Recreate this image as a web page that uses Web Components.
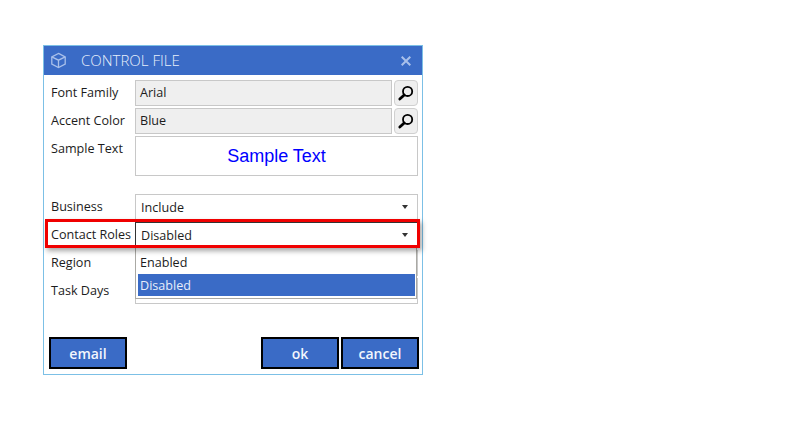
<!DOCTYPE html>
<html>
<head>
<meta charset="utf-8">
<title>Control File</title>
<style>
    html, body {
        margin: 0;
        background: #fff;
    }

    body {
        padding: 45px 0 0 43px;
        font-family: "Open Sans", "Noto Sans", sans-serif;
    }
</style>
</head>
<body>
<e-dialog heading="CONTROL FILE">
    <e-field label="Font Family"><e-lookup value="Arial"></e-lookup></e-field>
    <e-field label="Accent Color"><e-lookup value="Blue"></e-lookup></e-field>
    <e-field label="Sample Text" tall><e-sample>Sample Text</e-sample></e-field>
    <e-field label="Business" spaced><e-select value="Include"></e-select></e-field>
    <e-field label="Contact Roles" marked>
        <e-select value="Disabled" open></e-select>
    </e-field>
    <e-field label="Region"><e-select></e-select></e-field>
    <e-field label="Task Days"><e-select></e-select></e-field>
    <e-button slot="left">email</e-button>
    <e-button slot="right">ok</e-button>
    <e-button slot="right">cancel</e-button>
</e-dialog>

<script>
class EDialog extends HTMLElement {
    constructor() {
        super();
        this.shadow = this.attachShadow({mode: 'open'});
    }

    connectedCallback() {
        this.shadow.innerHTML = `
            <style>
                :host {
                    display: flex;
                    flex-direction: column;
                    box-sizing: border-box;
                    width: 380px;
                    height: 330px;
                    border: 1px solid #7cc0e6;
                    background: #fff;
                }

                .header {
                    display: flex;
                    align-items: center;
                    height: 29px;
                    padding: 0 11px 0 6px;
                    background: #3a6bc6;
                    color: #e8effb;
                    font-size: 15px;
                    font-weight: 300;
                }

                .cube {
                    width: 17px;
                    height: 17px;
                    margin-right: 14px;
                }

                .title {
                    flex: 1;
                    padding-bottom: 2px;
                }

                .close {
                    width: 10px;
                    height: 10px;
                }

                .form {
                    display: flex;
                    flex-direction: column;
                    gap: 2px;
                    padding: 5px 4px 0 7px;
                }

                .footer {
                    display: flex;
                    justify-content: space-between;
                    margin-top: auto;
                    padding: 0 3px 5px 5px;
                }

                .footer div {
                    display: flex;
                    gap: 2px;
                }
            </style>

            <div class="header">
                <svg class="cube" viewBox="0 0 17 17" fill="none" stroke="#a9c0ea" stroke-width="1.3">
                    <path d="M8.5 1.4 15.2 4.8v7.4l-6.7 3.4-6.7-3.4V4.8z"></path>
                    <path d="M1.8 4.8l6.7 3.4 6.7-3.4M8.5 8.2v7.4"></path>
                </svg>
                <span class="title">${this.getAttribute('heading')}</span>
                <svg class="close" viewBox="0 0 10 10" fill="none" stroke="#a9c0ea" stroke-width="2">
                    <path d="M.7.7l8.6 8.6M9.3.7.7 9.3"></path>
                </svg>
            </div>
            <div class="form"><slot></slot></div>
            <div class="footer">
                <div><slot name="left"></slot></div>
                <div><slot name="right"></slot></div>
            </div>
        `;
    }
}

class EField extends HTMLElement {
    constructor() {
        super();
        this.shadow = this.attachShadow({mode: 'open'});
    }

    connectedCallback() {
        this.shadow.innerHTML = `
            <style>
                :host {
                    position: relative;
                    display: grid;
                    grid-template-columns: 84px 283px;
                    height: 26px;
                    color: #1c1c1c;
                    font-size: 12.6px;
                }

                :host([tall]) {
                    height: 40px;
                }

                :host([spaced]) {
                    margin-top: 16px;
                }

                label {
                    padding-top: 4px;
                    white-space: nowrap;
                }

                /* red marker drawn over the row */
                .mark {
                    display: none;
                    position: absolute;
                    z-index: 3;
                    left: -6px;
                    top: -3px;
                    width: 375px;
                    height: 29px;
                    box-sizing: border-box;
                    border: 3px solid #f00000;
                    box-shadow: 2px 3px 5px rgba(0, 0, 0, .35);
                    pointer-events: none;
                }

                :host([marked]) .mark {
                    display: block;
                }
            </style>

            <label>${this.getAttribute('label')}</label>
            <div><slot></slot></div>
            <div class="mark"></div>
        `;
    }
}

class ELookup extends HTMLElement {
    constructor() {
        super();
        this.shadow = this.attachShadow({mode: 'open'});
    }

    connectedCallback() {
        this.shadow.innerHTML = `
            <style>
                :host {
                    display: flex;
                    gap: 2px;
                    height: 26px;
                }

                .value {
                    box-sizing: border-box;
                    width: 257px;
                    padding: 3px 0 0 4px;
                    border: 1px solid #c8c8c8;
                    background: #efefef;
                }

                .search {
                    display: flex;
                    align-items: center;
                    justify-content: center;
                    box-sizing: border-box;
                    width: 24px;
                    border: 1px solid #d0d0d0;
                    border-radius: 4px;
                    background: #efefef;
                }
            </style>

            <div class="value">${this.getAttribute('value')}</div>
            <div class="search">
                <svg width="18" height="18" viewBox="0 0 18 18" fill="none" stroke="#000">
                    <circle cx="10.6" cy="7.4" r="4.6" stroke-width="1.8"></circle>
                    <path d="M7.2 11 2.8 15" stroke-width="2.8" stroke-linecap="round"></path>
                </svg>
            </div>
        `;
    }
}

class ESample extends HTMLElement {
    constructor() {
        super();
        this.shadow = this.attachShadow({mode: 'open'});
    }

    connectedCallback() {
        this.shadow.innerHTML = `
            <style>
                :host {
                    display: flex;
                    align-items: center;
                    justify-content: center;
                    box-sizing: border-box;
                    height: 40px;
                    border: 1px solid #c8c8c8;
                    color: #0000ff;
                    font: 18px "Liberation Sans", Arial, sans-serif;
                }
            </style>

            <slot></slot>
        `;
    }
}

class ESelect extends HTMLElement {
    constructor() {
        super();
        this.shadow = this.attachShadow({mode: 'open'});
    }

    connectedCallback() {
        const value = this.getAttribute('value') || '';
        this.shadow.innerHTML = `
            <style>
                :host {
                    position: relative;
                    display: flex;
                    align-items: center;
                    justify-content: space-between;
                    box-sizing: border-box;
                    height: 26px;
                    padding: 0 9px 0 5px;
                    border: 1px solid #c8c8c8;
                    background: #fff;
                }

                :host([open]) {
                    border-color: #333;
                    border-bottom-color: transparent;
                }

                .arrow {
                    width: 0;
                    height: 0;
                    border: 3.5px solid transparent;
                    border-top: 4px solid #333;
                    border-bottom: 0;
                }

                .popup {
                    display: none;
                    position: absolute;
                    z-index: 2;
                    left: -1px;
                    top: 25px;
                    width: 282px;
                    box-sizing: border-box;
                    padding: 4px 1px 2px 2px;
                    border: 1px solid #aaa9a4;
                    border-top: 0;
                    background: #fff;
                }

                :host([open]) .popup {
                    display: block;
                }

                .option {
                    height: 22px;
                    padding-left: 2px;
                    line-height: 21px;
                }

                .option.active {
                    background: #3a6bc6;
                    color: #e8eefa;
                    line-height: 23px;
                }
            </style>

            <span>${value}</span>
            <span class="arrow"></span>
            <div class="popup">
                <div class="option">Enabled</div>
                <div class="option active">Disabled</div>
            </div>
        `;
    }
}

class EButton extends HTMLElement {
    constructor() {
        super();
        this.shadow = this.attachShadow({mode: 'open'});
    }

    connectedCallback() {
        this.shadow.innerHTML = `
            <style>
                :host {
                    display: flex;
                    align-items: center;
                    justify-content: center;
                    box-sizing: border-box;
                    width: 78px;
                    height: 32px;
                    border: 2px solid #000;
                    background: #3a6bc6;
                    color: #f2f6fd;
                    font-size: 14px;
                    font-weight: 600;
                }
            </style>

            <slot></slot>
        `;
    }
}

customElements.define('e-dialog', EDialog);
customElements.define('e-field', EField);
customElements.define('e-lookup', ELookup);
customElements.define('e-sample', ESample);
customElements.define('e-select', ESelect);
customElements.define('e-button', EButton);
</script>
</body>
</html>
